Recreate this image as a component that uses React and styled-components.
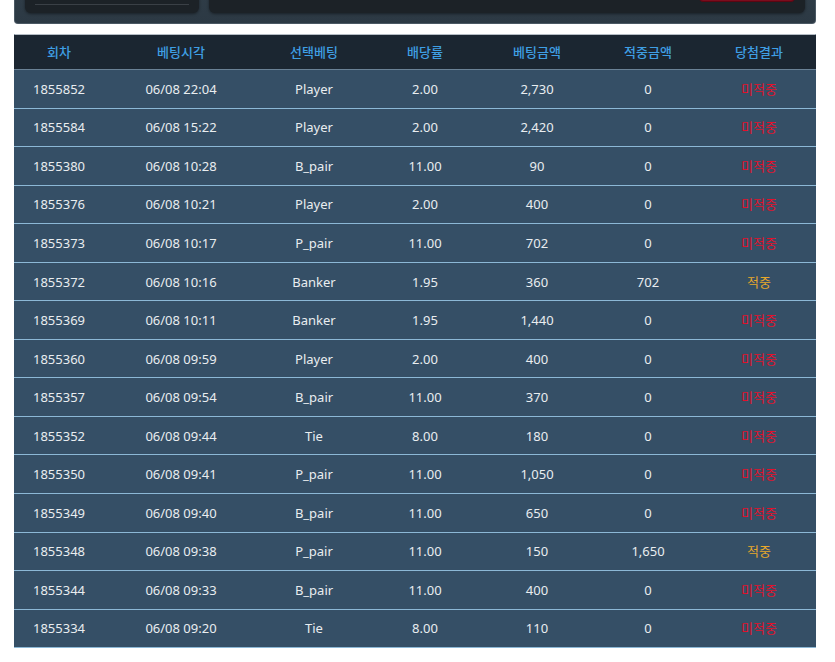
import React from "react";
import styled, { createGlobalStyle } from "styled-components";

const Global = createGlobalStyle`
  html, body { margin: 0; padding: 0; background: #ffffff; }
  body { font-family: "Noto Sans", "Noto Sans CJK KR", sans-serif; }
`;

const Page = styled.div`
  width: 835px;
  margin-top: -56px;
  padding: 0 19px 0 14px;
  box-sizing: border-box;
`;

const TopPanel = styled.div`
  height: 80px;
  box-sizing: border-box;
  background: linear-gradient(#34424d, #2c3944);
  border: 1px solid #4a5863;
  border-top: none;
  border-radius: 0 0 4px 4px;
  padding: 0 10px 10px 10px;
  display: flex;
  gap: 10px;
  align-items: flex-end;
`;

const InnerPanel = styled.div`
  height: 100%;
  width: ${(p) => p.$width || "auto"};
  flex: ${(p) => (p.$grow ? 1 : "none")};
  background: #1c2227;
  border-radius: 0 0 6px 6px;
  box-shadow: 0 1px 3px rgba(0, 0, 0, 0.45);
  display: flex;
  flex-direction: column;
  justify-content: flex-end;
  align-items: ${(p) => (p.$align || "stretch")};
  padding: 0 10px 8px 10px;
  box-sizing: border-box;
`;

const Rule = styled.div`
  height: 1px;
  background: #3a4046;
`;

const RedButton = styled.div`
  width: 96px;
  height: 30px;
  margin-bottom: 3px;
  background: #7c0c1d;
  border: 1px solid #5a0612;
  border-radius: 4px;
  box-sizing: border-box;
`;

const Table = styled.div`
  margin-top: 10px;
  border-top: 1px solid #b4bcc4;
  border-left: 1px solid #5c7488;
  border-right: 1px solid #5c7488;
  background: #354f66;
`;

const Row = styled.div`
  display: grid;
  grid-template-columns: 90px 154px 112px 110px 114px 108px 114px;
  height: ${(p) => (p.$head ? "34px" : "37.55px")};
  background: ${(p) => (p.$head ? "#1b2631" : "#354f66")};
  border-bottom: ${(p) => (p.$head ? "1.5px solid #6a8195" : "1px solid #8cb8d6")};
  align-items: center;
  margin-left: -1px;
  margin-right: -1px;
`;

const Cell = styled.div`
  text-align: center;
  font-size: 13px;
  line-height: 18px;
  color: ${(p) =>
    p.$head ? "#3f9fe4" : p.$tone === "lose" ? "#e3112c" : p.$tone === "win" ? "#e7a82a" : "#e9edf0"};
  font-weight: ${(p) => (p.$head ? 500 : 400)};
  white-space: nowrap;
`;

const headers = ["회차", "베팅시각", "선택베팅", "배당률", "베팅금액", "적중금액", "당첨결과"];

const rows = [
  ["1855852", "06/08 22:04", "Player", "2.00", "2,730", "0", "미적중"],
  ["1855584", "06/08 15:22", "Player", "2.00", "2,420", "0", "미적중"],
  ["1855380", "06/08 10:28", "B_pair", "11.00", "90", "0", "미적중"],
  ["1855376", "06/08 10:21", "Player", "2.00", "400", "0", "미적중"],
  ["1855373", "06/08 10:17", "P_pair", "11.00", "702", "0", "미적중"],
  ["1855372", "06/08 10:16", "Banker", "1.95", "360", "702", "적중"],
  ["1855369", "06/08 10:11", "Banker", "1.95", "1,440", "0", "미적중"],
  ["1855360", "06/08 09:59", "Player", "2.00", "400", "0", "미적중"],
  ["1855357", "06/08 09:54", "B_pair", "11.00", "370", "0", "미적중"],
  ["1855352", "06/08 09:44", "Tie", "8.00", "180", "0", "미적중"],
  ["1855350", "06/08 09:41", "P_pair", "11.00", "1,050", "0", "미적중"],
  ["1855349", "06/08 09:40", "B_pair", "11.00", "650", "0", "미적중"],
  ["1855348", "06/08 09:38", "P_pair", "11.00", "150", "1,650", "적중"],
  ["1855344", "06/08 09:33", "B_pair", "11.00", "400", "0", "미적중"],
  ["1855334", "06/08 09:20", "Tie", "8.00", "110", "0", "미적중"],
];

export default function App() {
  return (
    <>
      <Global />
      <Page>
        <TopPanel>
          <InnerPanel $width="174px">
            <Rule />
          </InnerPanel>
          <InnerPanel $grow $align="flex-end">
            <RedButton />
          </InnerPanel>
        </TopPanel>
        <Table>
          <Row $head>
            {headers.map((h) => (
              <Cell key={h} $head>
                {h}
              </Cell>
            ))}
          </Row>
          {rows.map((r) => (
            <Row key={r[0]}>
              {r.map((v, i) => (
                <Cell
                  key={i}
                  $tone={i === 6 ? (v === "적중" ? "win" : "lose") : undefined}
                >
                  {v}
                </Cell>
              ))}
            </Row>
          ))}
        </Table>
      </Page>
    </>
  );
}
